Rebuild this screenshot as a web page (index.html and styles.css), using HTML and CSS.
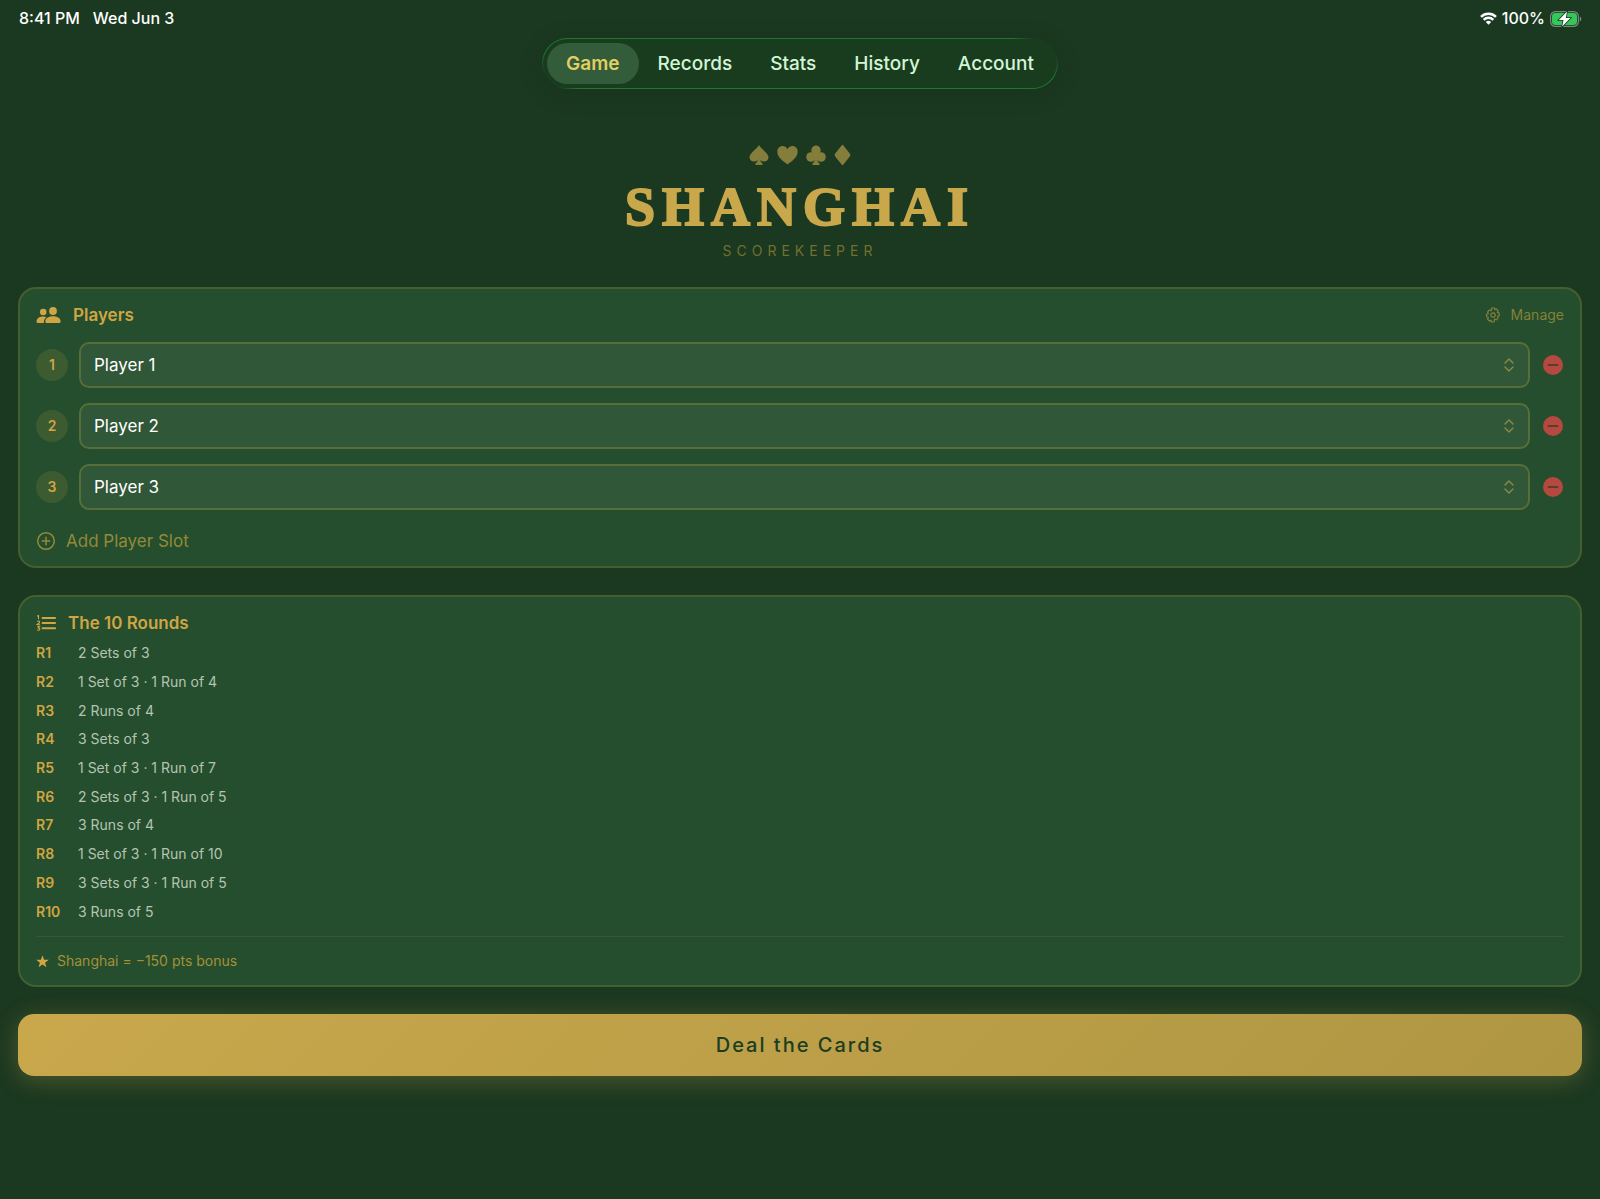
FILE: index.html
```html
<!DOCTYPE html>
<html lang="en">
<head>
<meta charset="utf-8">
<meta name="viewport" content="width=device-width, initial-scale=1">
<title>Shanghai Scorekeeper</title>
<link rel="stylesheet" href="styles.css">
</head>
<body>
<svg class="defs" aria-hidden="true">
  <symbol id="updown" viewBox="0 0 10 14"><path d="M1 5l4-4 4 4M1 9l4 4 4-4" fill="none" stroke="currentColor" stroke-width="1.4" stroke-linecap="round" stroke-linejoin="round"/></symbol>
  <symbol id="minus" viewBox="0 0 20 20"><circle cx="10" cy="10" r="10" fill="#b5483f"/><path d="M5.500 10h9" stroke="#3f3a22" stroke-width="1.700" stroke-linecap="round"/></symbol>
</svg>

<header class="status">
  <div class="status-left"><span>8:41 PM</span><span>Wed Jun 3</span></div>
  <div class="status-right">
    <svg width="17" height="13" viewBox="0 0 17 13" fill="none" stroke="#fff" stroke-width="2.500" aria-hidden="true"><path d="M1 4.800a10.600 10.600 0 0 1 15 0M3.700 7.800a6.800 6.800 0 0 1 9.600 0"/><path d="M8.500 12.800L5.800 10.100a3.800 3.800 0 0 1 5.400 0z" fill="#fff" stroke="none"/></svg>
    <span>100%</span>
    <svg width="32" height="16" viewBox="0 0 32 16" aria-hidden="true"><rect x=".6" y=".6" width="27.800" height="14.800" rx="4.800" fill="none" stroke="#7c8a7e" stroke-width="1.200"/><rect x="2" y="2" width="25" height="12" rx="3.400" fill="#34c759"/><path d="M29.800 5.500c2 .8 2 4.200 0 5z" fill="#7c8a7e"/><path d="M17 .4L8.800 9h4.700l-1.300 6.600L20.500 7h-4.700z" fill="#fff" stroke="#1c3820" stroke-width="1.600" paint-order="stroke"/></svg>
  </div>
</header>

<nav class="tabs">
  <a class="tab active" href="#game">Game</a>
  <a class="tab" href="#records">Records</a>
  <a class="tab" href="#stats">Stats</a>
  <a class="tab" href="#history">History</a>
  <a class="tab" href="#account">Account</a>
</nav>

<main class="page">
  <div class="brand">
    <div class="suits" aria-hidden="true">
      <svg width="20" height="20" viewBox="0 0 20 20"><path d="M10 0C11.500 3.500 19.500 8 19.500 12.200c0 4.300-5.300 5.500-8.200 2.700.2 1.800.9 2.600 2.200 3.400V20h-7v-1.700c1.300-.8 2-1.600 2.200-3.400C5.800 17.700.5 16.500.5 12.200.5 8 8.500 3.500 10 0z"/></svg>
      <svg width="21" height="20" viewBox="0 0 21 20"><path d="M10.500 19.500C6.500 16.500.3 12.200.3 6.700.3 3.300 2.700 1 5.500 1c2.200 0 4 1.200 5 3.200C11.500 2.200 13.300 1 15.500 1c2.800 0 5.200 2.300 5.200 5.700 0 5.500-6.200 9.800-10.200 12.800z"/></svg>
      <svg width="20" height="20" viewBox="0 0 20 20"><circle cx="10" cy="5.200" r="4.700"/><circle cx="5" cy="12" r="4.800"/><circle cx="15" cy="12" r="4.800"/><path d="M8.500 8h3l-.3 6.500c.2 2 .9 3 2.300 3.800V20h-7v-1.700c1.400-.8 2.100-1.800 2.300-3.800z"/></svg>
      <svg width="17" height="22" viewBox="0 0 17 22"><path d="M8.500.8Q9 .8 9.400 1.400L16 9.800q.8 1.200 0 2.400l-6.600 8.400q-.9 1.200-1.800 0L1 12.200q-.8-1.200 0-2.400L7.600 1.400Q8 .8 8.500.8z"/></svg>
    </div>
    <h1 class="title">SHANGHAI</h1>
    <p class="subtitle">SCOREKEEPER</p>
  </div>

  <section class="card players">
    <div class="card-head">
      <svg class="gold" width="25" height="17" viewBox="0 0 25 17" aria-hidden="true"><circle cx="7.200" cy="5" r="3.300"/><path d="M.5 14.800C.5 11.500 3 9.400 7 9.400q1.900 0 3.300.6Q8 12 7.800 16H1.800Q.5 16 .5 14.800z"/><circle cx="17" cy="4" r="3.900"/><path d="M9.300 14.700C9.300 11.500 12 9.200 17 9.200s7.600 2.300 7.600 5.500Q24.600 16 23.300 16H10.600q-1.300 0-1.300-1.300z"/></svg>
      <h2 class="card-title">Players</h2>
      <button class="manage" type="button">
        <svg width="16" height="16" viewBox="0 0 16 16" fill="none" stroke="currentColor" stroke-width="1.200" stroke-linejoin="round" aria-hidden="true"><path d="M6.700 1h2.600l.5 1.700 1.500-.8 1.900 1.800-.9 1.600 1.900.8v2.600l-1.800.6.8 1.600-1.900 1.900-1.600-.9L9 15H6.600L6 13.200l-1.600.8-1.800-1.900.8-1.600L1.600 9.800V7.200l1.700-.6-.7-1.700 1.800-1.900 1.700.8z"/><circle cx="8" cy="8" r="2.200"/></svg>
        <span>Manage</span>
      </button>
    </div>

    <div class="player-list">
      <div class="player">
        <label class="badge" for="p1">1</label>
        <div class="picker"><select id="p1"><option>Player 1</option></select><svg class="picker-icon" width="10" height="14" aria-hidden="true"><use href="#updown"/></svg></div>
        <button class="remove" type="button" aria-label="Remove player 1"><svg width="20" height="20"><use href="#minus"/></svg></button>
      </div>
      <div class="player">
        <label class="badge" for="p2">2</label>
        <div class="picker"><select id="p2"><option>Player 2</option></select><svg class="picker-icon" width="10" height="14" aria-hidden="true"><use href="#updown"/></svg></div>
        <button class="remove" type="button" aria-label="Remove player 2"><svg width="20" height="20"><use href="#minus"/></svg></button>
      </div>
      <div class="player">
        <label class="badge" for="p3">3</label>
        <div class="picker"><select id="p3"><option>Player 3</option></select><svg class="picker-icon" width="10" height="14" aria-hidden="true"><use href="#updown"/></svg></div>
        <button class="remove" type="button" aria-label="Remove player 3"><svg width="20" height="20"><use href="#minus"/></svg></button>
      </div>
    </div>

    <button class="add" type="button">
      <svg width="20" height="20" viewBox="0 0 20 20" fill="none" stroke="currentColor" stroke-width="1.500" stroke-linecap="round" aria-hidden="true"><circle cx="10" cy="10" r="8.300"/><path d="M10 6.300v7.400M6.300 10h7.400"/></svg>
      <span>Add Player Slot</span>
    </button>
  </section>

  <section class="card rounds">
    <div class="card-head">
      <svg width="20" height="16" viewBox="0 0 20 16" fill="none" stroke="#d0a544" aria-hidden="true"><path d="M6.500 3h12.700M6.500 8h12.700M6.500 13.200h12.700" stroke-width="1.900" stroke-linecap="round"/><path d="M1.200 1.300l1.300-.8v3.700M1.200 6.600q2.400-1.200 2.400.3 0 .6-2.300 2.500h2.500M1.300 11.400h2.300l-1.300 1.500q1.500 0 1.500 1.200 0 1.500-2.600 1" stroke-width="1.100"/></svg>
      <h2 class="card-title">The 10 Rounds</h2>
    </div>
    <table class="round-table">
      <tr><th scope="row">R1</th><td>2 Sets of 3</td></tr>
      <tr><th scope="row">R2</th><td>1 Set of 3 · 1 Run of 4</td></tr>
      <tr><th scope="row">R3</th><td>2 Runs of 4</td></tr>
      <tr><th scope="row">R4</th><td>3 Sets of 3</td></tr>
      <tr><th scope="row">R5</th><td>1 Set of 3 · 1 Run of 7</td></tr>
      <tr><th scope="row">R6</th><td>2 Sets of 3 · 1 Run of 5</td></tr>
      <tr><th scope="row">R7</th><td>3 Runs of 4</td></tr>
      <tr><th scope="row">R8</th><td>1 Set of 3 · 1 Run of 10</td></tr>
      <tr><th scope="row">R9</th><td>3 Sets of 3 · 1 Run of 5</td></tr>
      <tr><th scope="row">R10</th><td>3 Runs of 5</td></tr>
    </table>
    <p class="bonus">
      <svg class="gold" width="13" height="13" viewBox="0 0 13 13" aria-hidden="true"><path d="M6.500.2l1.600 4.500 4.700.1-3.700 2.900 1.300 4.600-3.900-2.700-3.900 2.700 1.300-4.600L.2 4.800l4.700-.1z"/></svg>
      <span>Shanghai = −150 pts bonus</span>
    </p>
  </section>

  <button class="deal" type="button">Deal the Cards</button>
</main>
</body>
</html>
```
FILE: styles.css
```css
:root {
  --felt: #1b3820;
  --card: #244e2d;
  --gold: #c9a84c;
  --gold-bright: #d0a544;
}

* { box-sizing: border-box; }

body {
  margin: 0;
  min-height: 100vh;
  background: var(--felt);
  color: #fff;
  font-family: Inter, "Liberation Sans", sans-serif;
}

h1, h2, p { margin: 0; }

button {
  margin: 0;
  padding: 0;
  border: 0;
  background: none;
  font-family: inherit;
}

svg { display: block; flex: none; }

.defs { display: none; }
.gold { fill: var(--gold-bright); }

.status {
  display: flex;
  justify-content: space-between;
  padding: 0 18px 1px 19px;
  font-size: 16px;
  font-weight: 500;
  line-height: 37px;
}

.status-left, .status-right { display: flex; align-items: center; }
.status-left { gap: 13px; }
.status-right { gap: 5px; }

.tabs {
  display: flex;
  width: max-content;
  margin: 0 auto;
  padding: 4px;
  border: 1px solid transparent;
  border-radius: 26px;
  background:
    linear-gradient(#193c1e, #193c1e) padding-box,
    radial-gradient(circle 36px at 98% 8%, var(--felt) 40%, transparent) border-box,
    radial-gradient(circle 32px at 1% 88%, var(--felt) 30%, transparent) border-box,
    linear-gradient(#1c7a30, #1c7a30) border-box;
  box-shadow: 0 4px 24px rgba(20, 40, 20, 0.2);
}

.tab {
  padding: 0 19px;
  border-radius: 21px;
  color: #d3f5d6;
  font-size: 19px;
  font-weight: 500;
  line-height: 41px;
  text-decoration: none;
}

.tab.active {
  background: #335c3b;
  color: #e2cf62;
  font-weight: 600;
}

.page {
  display: flex;
  flex-direction: column;
  gap: 27px;
  padding: 55px 18px 32px;
}

.brand {
  display: flex;
  flex-direction: column;
  align-items: center;
}

.suits {
  display: flex;
  align-items: center;
  gap: 8px;
  fill: #857d3b;
}

.title {
  margin-top: 9px;
  color: var(--gold);
  font-family: "Liberation Serif", serif;
  font-size: 54px;
  font-weight: 700;
  line-height: 64px;
  letter-spacing: 7px;
  -webkit-text-stroke: 2px var(--gold);
}

.subtitle {
  margin-top: 3px;
  color: #72702f;
  font-size: 14px;
  line-height: 18px;
  letter-spacing: 5px;
}

.card {
  padding: 16px 16px 14px;
  border: 2px solid #455f2f;
  border-radius: 18px;
  background: var(--card);
}

.card-head {
  display: flex;
  align-items: center;
  height: 20px;
  gap: 12px;
}

.card-title {
  color: var(--gold-bright);
  font-size: 17px;
  font-weight: 600;
  line-height: 20px;
}

.manage {
  display: flex;
  align-items: center;
  gap: 10px;
  margin-left: auto;
  color: #83813a;
  font-size: 14px;
  line-height: 20px;
}

.player-list {
  display: grid;
  gap: 15px;
  margin-top: 17px;
}

.player {
  display: flex;
  align-items: center;
  gap: 11px;
}

.badge {
  width: 32px;
  border-radius: 50%;
  background: #3d5b30;
  color: var(--gold-bright);
  font-size: 14px;
  font-weight: 600;
  line-height: 32px;
  text-align: center;
}

.picker {
  position: relative;
  flex: 1;
}

.picker select {
  display: block;
  width: 100%;
  height: 46px;
  padding: 0 13px;
  border: 2px solid #586e39;
  border-radius: 10px;
  appearance: none;
  background: #305738;
  color: #fff;
  font-family: inherit;
  font-size: 17px;
}

.picker-icon {
  position: absolute;
  top: 16px;
  right: 16px;
  color: #8d8a42;
  pointer-events: none;
}

.remove { margin: 0 1px 0 2px; }

.add {
  display: flex;
  align-items: center;
  gap: 10px;
  margin-top: 20px;
  color: #95893a;
  font-size: 17px;
  line-height: 22px;
}

.round-table {
  width: 100%;
  height: 287px;
  margin-top: 6px;
  border-collapse: collapse;
  font-size: 14px;
  line-height: 20px;
  text-align: left;
}

.round-table th {
  width: 42px;
  padding: 0;
  color: var(--gold-bright);
  font-weight: 600;
}

.round-table td {
  padding: 0;
  color: #b5c4b2;
}

.bonus {
  display: flex;
  align-items: center;
  gap: 8px;
  margin-top: 10px;
  padding-top: 14px;
  border-top: 1px solid #35573a;
  color: #a49039;
  font-size: 14px;
  line-height: 20px;
}

.deal {
  height: 62px;
  border-radius: 16px;
  background: linear-gradient(135deg, #c9a84c, #af9643);
  box-shadow: 0 4px 24px rgba(201, 168, 76, 0.3);
  color: #1b3d20;
  font-size: 20px;
  font-weight: 500;
  letter-spacing: 2px;
}
```
